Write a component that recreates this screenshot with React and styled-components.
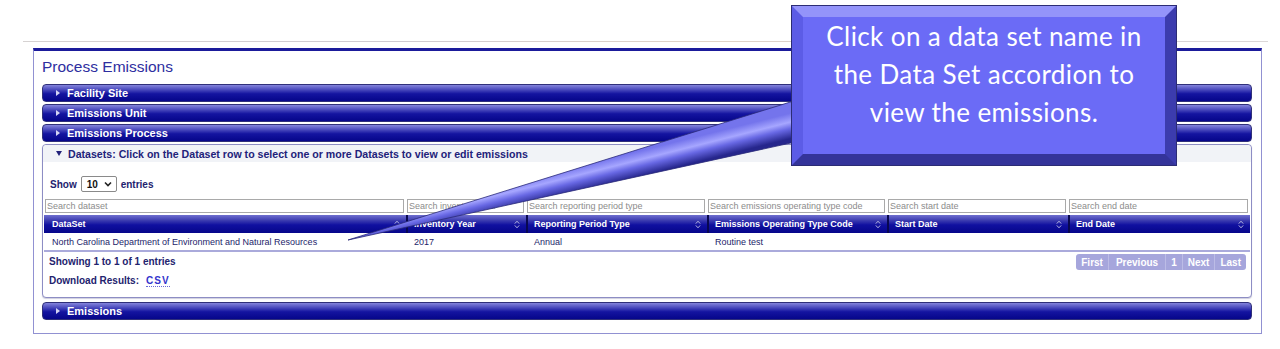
import React from "react";
import styled, { createGlobalStyle } from "styled-components";

const GlobalStyle = createGlobalStyle`
  body {
    margin: 0;
    background: #fff;
    font-family: "Liberation Sans", Arial, sans-serif;
  }
`;

const Page = styled.div`
  position: relative;
  width: 1280px;
  height: 349px;
  box-sizing: border-box;
  padding: 41px 0 0 23px;
  overflow: hidden;
`;

const Rule = styled.div`
  width: 1245px;
  height: 1px;
  background: linear-gradient(90deg, #d6d2d2 0%, #cfcbd2 30%, #e0d4c8 55%, #d2ced6 80%, #dcd8d8 100%);
`;

const Panel = styled.div`
  margin: 6px 0 0 10px;
  width: 1229px;
  box-sizing: border-box;
  border: 1px solid #9191d2;
  border-top: 3px solid #1b1b9b;
  padding: 0 9px 11px 8px;
`;

const Title = styled.h1`
  margin: 0 0 8px;
  padding-top: 7px;
  font-size: 15.5px;
  line-height: 18px;
  font-weight: normal;
  color: #2e2ea0;
`;

const AccordionHeader = styled.div`
  height: 18px;
  box-sizing: border-box;
  margin-bottom: 2px;
  display: flex;
  align-items: center;
  gap: 7px;
  padding-left: 13px;
  border: 1px solid #30307a;
  border-radius: 4px;
  background: linear-gradient(#8484dc 0%, #4848bc 30%, #1414a0 55%, #06068a 100%);
  color: #fff;
  font-size: 11px;
  font-weight: bold;
`;

const Caret = styled.span`
  width: 0;
  height: 0;
  ${(p) =>
    p.$open
      ? `border-left: 3.5px solid transparent;
         border-right: 3.5px solid transparent;
         border-top: 5px solid #22227a;`
      : `border-top: 3px solid transparent;
         border-bottom: 3px solid transparent;
         border-left: 4px solid #d4d4f4;`}
`;

const Section = styled.div`
  margin-bottom: 4px;
  border: 1px solid #8d8dc4;
  border-radius: 4px;
  padding: 0 1px 8px;
  background: #fff;
  box-shadow: 0 1px 1px rgba(60, 60, 120, 0.25);
`;

const SectionHeader = styled.div`
  height: 17px;
  display: flex;
  align-items: center;
  gap: 6px;
  margin: 0 -1px;
  padding-left: 13px;
  background: #f1f3f7;
  border-radius: 4px 4px 0 0;
  color: #22227a;
  font-size: 10.6px;
  font-weight: bold;
`;

const LengthRow = styled.div`
  margin: 14px 0 0 6px;
  height: 16px;
  display: flex;
  align-items: center;
  gap: 4px;
  color: #22226e;
  font-size: 10px;
  font-weight: bold;
`;

const Select = styled.div`
  width: 36px;
  height: 16px;
  box-sizing: border-box;
  border: 1px solid #8a8a8a;
  border-radius: 2px;
  display: flex;
  align-items: center;
  justify-content: space-between;
  padding: 0 4px 0 5px;
  color: #111;
  background: #fff;
`;

const Grid = styled.div`
  display: grid;
  grid-template-columns: 362px 120px 181px 180px 181px 182px;
`;

const SearchRow = styled(Grid)`
  margin-top: 7px;
`;

const SearchCell = styled.div`
  padding: 0 2px 0 1px;
`;

const SearchInput = styled.div`
  height: 14px;
  box-sizing: border-box;
  border: 1px solid #a9a9a9;
  padding-left: 1px;
  font-size: 9px;
  line-height: 12px;
  color: #8c8c8c;
  background: #fff;
  white-space: nowrap;
  overflow: hidden;
`;

const HeadRow = styled(Grid)`
  margin-top: 2px;
  height: 18px;
  background: linear-gradient(#7070d0 0%, #3c3cb0 30%, #1010a0 55%, #06068a 100%);
`;

const HeadCell = styled.div`
  display: flex;
  align-items: center;
  justify-content: space-between;
  padding: 0 6px 0 ${(p) => (p.$first ? 8 : 6)}px;
  border-left: ${(p) => (p.$first ? "none" : "2px solid #080850")};
  color: #fff;
  font-size: 9px;
  font-weight: bold;
`;

const BodyRow = styled(Grid)`
  height: 17px;
  border-bottom: 2px solid #aaaadb;
`;

const BodyCell = styled.div`
  display: flex;
  align-items: center;
  padding-left: 8px;
  color: #1d1d6a;
  font-size: 9px;
`;

const FooterRow = styled.div`
  margin-top: 2px;
  display: flex;
  justify-content: space-between;
  align-items: center;
  padding: 0 4px 0 5px;
`;

const Info = styled.div`
  color: #23236e;
  font-size: 10px;
  font-weight: bold;
  line-height: 16px;
`;

const Pager = styled.div`
  display: flex;
  height: 16px;
  border-radius: 3px;
  background: #a6a6dc;
  overflow: hidden;
`;

const PageButton = styled.span`
  display: flex;
  align-items: center;
  padding: 0 ${(p) => p.$pad || 5}px;
  color: #fff;
  font-size: 10px;
  font-weight: bold;
  border-left: ${(p) => (p.$first ? "none" : "1px solid #bcbce6")};
`;

const DownloadRow = styled.div`
  margin: 3px 0 0 5px;
  line-height: 16px;
  color: #23236e;
  font-size: 10px;
  font-weight: bold;
`;

const CsvLink = styled.span`
  margin-left: 7px;
  color: #3333cc;
  letter-spacing: 1px;
  border-bottom: 1px dotted #6a6ad8;
`;

const Callout = styled.div`
  position: absolute;
  left: 792px;
  top: 6px;
  width: 384px;
  height: 159px;
  box-sizing: border-box;
  border-style: solid;
  border-width: 11px;
  border-color: #9494fa #3c3cae #34349a #5c5ce6;
  outline: 1px solid #2c2c74;
  background: #6b6bf6;
  color: #fff;
  font-family: Lato, "Open Sans", sans-serif;
  font-size: 26px;
  letter-spacing: 0.4px;
  line-height: 38px;
  text-align: center;
  white-space: nowrap;
  z-index: 3;
`;

const Pointer = styled.svg`
  position: absolute;
  left: 0;
  top: 0;
  z-index: 2;
  pointer-events: none;
`;

function SortIcon({ only }) {
  return (
    <svg width="6" height="9" viewBox="0 0 6 9">
      <path d="M0.8 3.6 L3 1.2 L5.2 3.6" fill="none" stroke="#b4b4e0" strokeWidth="1" />
      {!only && <path d="M0.8 5.4 L3 7.8 L5.2 5.4" fill="none" stroke="#b4b4e0" strokeWidth="1" />}
    </svg>
  );
}

const columns = [
  { search: "Search dataset", title: "DataSet", cell: "North Carolina Department of Environment and Natural Resources" },
  { search: "Search inventory year", title: "Inventory Year", cell: "2017" },
  { search: "Search reporting period type", title: "Reporting Period Type", cell: "Annual" },
  { search: "Search emissions operating type code", title: "Emissions Operating Type Code", cell: "Routine test" },
  { search: "Search start date", title: "Start Date", cell: "" },
  { search: "Search end date", title: "End Date", cell: "" },
];

export default function App() {
  return (
    <Page>
      <GlobalStyle />
      <Rule />
      <Panel>
        <Title>Process Emissions</Title>
        {["Facility Site", "Emissions Unit", "Emissions Process"].map((t) => (
          <AccordionHeader key={t}>
            <Caret />
            {t}
          </AccordionHeader>
        ))}
        <Section>
          <SectionHeader>
            <Caret $open />
            Datasets: Click on the Dataset row to select one or more Datasets to view or edit emissions
          </SectionHeader>
          <LengthRow>
            Show
            <Select>
              10
              <svg width="8" height="6" viewBox="0 0 8 6">
                <path d="M1 1.5 L4 4.5 L7 1.5" fill="none" stroke="#222" strokeWidth="1.6" />
              </svg>
            </Select>
            entries
          </LengthRow>
          <SearchRow>
            {columns.map((c) => (
              <SearchCell key={c.search}>
                <SearchInput>{c.search}</SearchInput>
              </SearchCell>
            ))}
          </SearchRow>
          <HeadRow>
            {columns.map((c, i) => (
              <HeadCell key={c.title} $first={i === 0}>
                {c.title}
                <SortIcon only={i === 0} />
              </HeadCell>
            ))}
          </HeadRow>
          <BodyRow>
            {columns.map((c) => (
              <BodyCell key={c.title}>{c.cell}</BodyCell>
            ))}
          </BodyRow>
          <FooterRow>
            <Info>Showing 1 to 1 of 1 entries</Info>
            <Pager>
              <PageButton $first>First</PageButton>
              <PageButton $pad={7}>Previous</PageButton>
              <PageButton>1</PageButton>
              <PageButton>Next</PageButton>
              <PageButton>Last</PageButton>
            </Pager>
          </FooterRow>
          <DownloadRow>
            Download Results:
            <CsvLink>CSV</CsvLink>
          </DownloadRow>
        </Section>
        <AccordionHeader>
          <Caret />
          Emissions
        </AccordionHeader>
      </Panel>

      <Pointer width="1280" height="349" viewBox="0 0 1280 349">
        <defs>
          <linearGradient id="tail" gradientUnits="userSpaceOnUse" x1="571" y1="168" x2="577" y2="192">
            <stop offset="0" stopColor="#7474ec" />
            <stop offset="0.35" stopColor="#a6a6ff" />
            <stop offset="0.6" stopColor="#6868e4" />
            <stop offset="1" stopColor="#26268c" />
          </linearGradient>
        </defs>
        <polygon points="800,99 800,141 348,240" fill="url(#tail)" stroke="#2a2a78" strokeWidth="0.8" />
      </Pointer>
      <Callout>
        Click on a data set name in
        <br />
        the Data Set accordion to
        <br />
        view the emissions.
      </Callout>
    </Page>
  );
}
